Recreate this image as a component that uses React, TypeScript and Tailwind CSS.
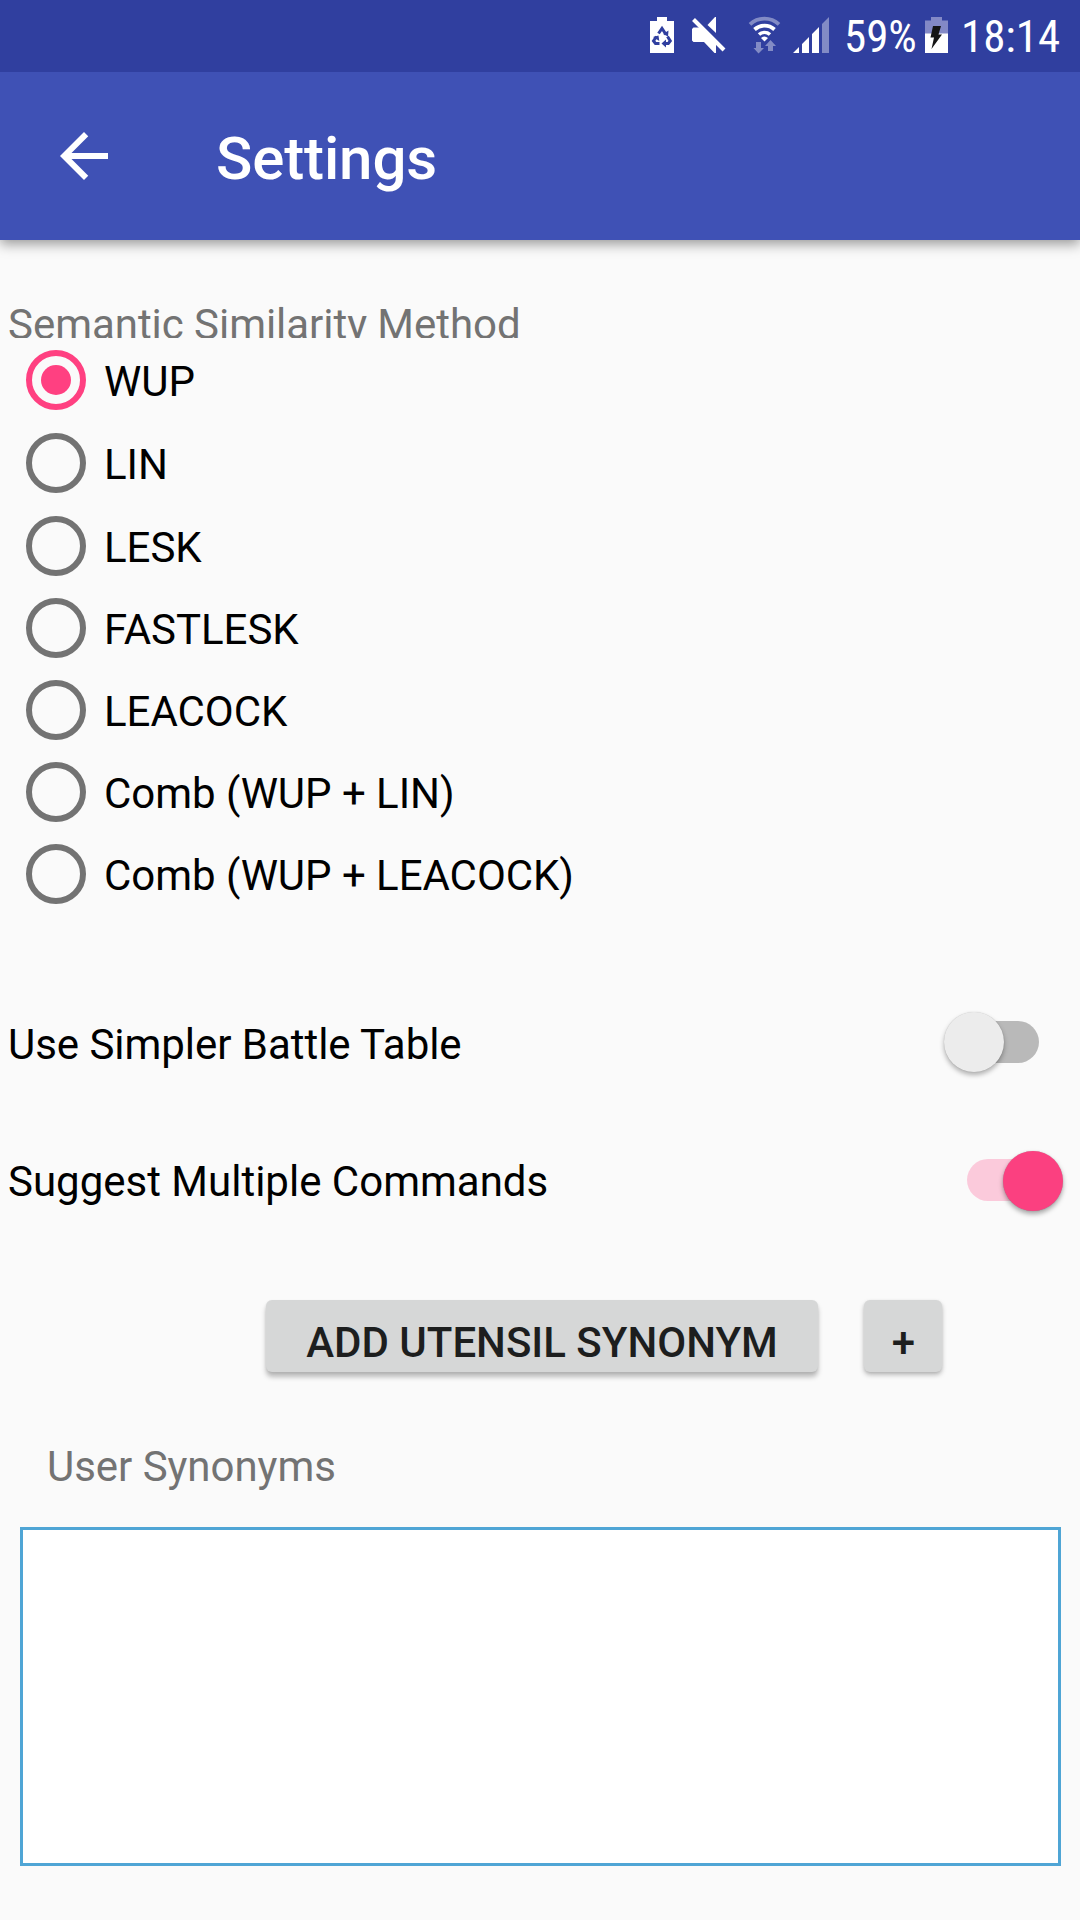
import React from "react";

const options = [
  { label: "WUP", row: "h-[83px]", on: true },
  { label: "LIN", row: "h-[83px]", on: false },
  { label: "LESK", row: "h-[82px]", on: false },
  { label: "FASTLESK", row: "h-[82px]", on: false },
  { label: "LEACOCK", row: "h-[82px]", on: false },
  { label: "Comb (WUP + LIN)", row: "h-[82px]", on: false },
  { label: "Comb (WUP + LEACOCK)", row: "h-[82px]", on: false },
];

function StatusIcons() {
  return (
    <svg width="200" height="72" viewBox="640 0 200 72" className="block h-[72px] w-[200px]">
      <path d="M657 17h10v4h7v32h-24V21h7z" fill="#fff" />
      <g fill="none" stroke="#303f9f" strokeWidth="3">
        <path d="M658.500 33.500l3.500-5 4 6" />
        <path d="M667.500 36.500l2.800 4.500-2 2.500h-4" />
        <path d="M659.500 43.500h-4l-2-2.500 3-4.500" />
      </g>
      <g fill="#303f9f">
        <path d="M668.500 30.500l-.5 6-5-2.500z" />
        <path d="M666 39.500v8l-4.500-4z" />
        <path d="M653 37l5.500-1.500.8 5.500z" />
      </g>
      <path d="M692 29l1.500-1.500h8.500L716 42v11h-1.500L704 42h-10.500L692 40.500z" fill="#fff" />
      <path d="M707.500 25l7.500-8h1v16z" fill="#fff" />
      <path d="M693.500 19.500L724 50" stroke="#fff" strokeWidth="4" />
      <g fill="none" stroke="#fff">
        <path d="M750 24.300a21.500 21.500 0 0 1 29 0" strokeWidth="3.800" opacity=".4" />
        <path d="M754.500 29.500a15 15 0 0 1 20 0" strokeWidth="3.800" />
        <path d="M759 34.500a8.500 8.500 0 0 1 11 0" strokeWidth="3.600" />
      </g>
      <path d="M761 38q3.500-3 7 0l-3.500 3.500z" fill="#fff" />
      <path d="M756 42h5v6h3l-5.500 5.500L753.500 48h2.500zM768 51v-5h-3l5.500-6 5.500 6h-3v5z" fill="#fff" opacity=".4" />
      <path d="M793 53l6-6v6zM802 53v-9l7-7v16zM812 53V34l7-7v26z" fill="#fff" />
      <path d="M822 53V24l7-7v36z" fill="#fff" opacity=".4" />
    </svg>
  );
}

function Battery() {
  return (
    <svg width="24" height="72" viewBox="925 0 24 72" className="block h-[72px] w-[24px]">
      <path d="M931 17h11v3.500h6V34h-23V20.500h6z" fill="#8389c6" />
      <path d="M925 33.500h23V53h-23z" fill="#fff" />
      <path d="M933 26h8l-2.500 8.500h3.500L931.500 49l2.500-11.500h-3.500z" fill="#151515" />
    </svg>
  );
}

function Switch({ on }: { on: boolean }) {
  return (
    <div className="relative mr-[17px] flex h-[60px] w-[120px] items-center justify-center">
      <div className={on ? "h-[42px] w-[72px] rounded-full bg-[#fbcadb]" : "h-[42px] w-[72px] rounded-full bg-[#b9b9b9]"} />
      <div
        className={
          on
            ? "absolute top-px right-[0.5px] size-[60px] rounded-full bg-[#fb4080] shadow-[0_3px_5px_rgba(0,0,0,0.35),0_0_1px_rgba(0,0,0,0.25)]"
            : "absolute top-0 left-[0.5px] size-[60px] rounded-full bg-[#ececec] shadow-[0_3px_5px_rgba(0,0,0,0.3),0_0_1px_rgba(0,0,0,0.2)]"
        }
      />
    </div>
  );
}

export default function App() {
  return (
    <div className="flex h-[1920px] w-[1080px] flex-col overflow-hidden bg-[#fafafa] font-['Roboto',sans-serif] text-[42px] leading-[50px] tracking-[-0.04px] text-black">
      <div className="relative z-10 flex h-[72px] shrink-0 bg-[#303f9f] text-white">
        <div className="ml-[640px] w-[200px]">
          <StatusIcons />
        </div>
        <div className="w-[85px] pt-[10px] pl-[4px]">
          <span className="block whitespace-nowrap text-[45px] leading-[54px] [font-stretch:75%]">59%</span>
        </div>
        <Battery />
        <div className="pt-[10px] pl-[12px]">
          <span className="block whitespace-nowrap text-[45px] leading-[54px] [font-stretch:75%]">18:14</span>
        </div>
      </div>
      <header className="flex h-[168px] shrink-0 items-center bg-[#3f51b5] text-white shadow-[0_4px_12px_rgba(0,0,0,0.4)]">
        <svg width="72" height="72" viewBox="0 0 24 24" className="ml-[48px]" fill="currentColor">
          <path d="M20 11H7.830l5.590-5.590L12 4l-8 8 8 8 1.410-1.410L7.830 13H20v-2z" />
        </svg>
        <h1 className="ml-[96px] pt-[6px] text-[60px] leading-[70px] font-medium tracking-[-0.12px]">Settings</h1>
      </header>
      <div className="mt-[60px] ml-[8px] h-[38px] shrink-0 overflow-hidden text-[#737373]">Semantic Similarity Method</div>
      <div className="mt-[12px] flex shrink-0 flex-col">
        {options.map((o) => (
          <label key={o.label} className={`flex items-start pl-[26px] ${o.row}`}>
            <span className={o.on ? "flex size-[60px] items-center justify-center rounded-full border-[6px] border-[#ff4081]" : "size-[60px] rounded-full border-[6px] border-[#737373]"}>
              {o.on && <span className="size-[30px] rounded-full bg-[#ff4081]" />}
            </span>
            <span className="ml-[18px] pt-[7px]">{o.label}</span>
          </label>
        ))}
      </div>
      <div className="mt-[86px] flex h-[60px] shrink-0 items-center justify-between pl-[8px]">
        <span className="pt-[6px]">Use Simpler Battle Table</span>
        <Switch on={false} />
      </div>
      <div className="mt-[78px] flex h-[60px] shrink-0 items-center justify-between pl-[8px]">
        <span className="pt-[4px] tracking-normal">Suggest Multiple Commands</span>
        <Switch on={true} />
      </div>
      <div className="mt-[90px] flex shrink-0 gap-[46px] pl-[266px] font-medium tracking-normal text-[#1d1e1e]">
        <button className="h-[72px] w-[552px] rounded-[6px] bg-[#d6d7d7] pt-[14px] leading-[50px] shadow-[0_5px_5px_rgba(0,0,0,0.25),0_1px_3px_rgba(0,0,0,0.08)]">ADD UTENSIL SYNONYM</button>
        <button className="h-[72px] w-[78px] rounded-[6px] bg-[#d6d7d7] pt-[14px] pl-px leading-[50px] shadow-[0_3px_5px_rgba(0,0,0,0.25),0_1px_3px_rgba(0,0,0,0.08)]">+</button>
      </div>
      <div className="mt-[70px] ml-[47px] h-[50px] shrink-0 text-[#737373]">User Synonyms</div>
      <div className="mt-[35px] ml-[20px] h-[339px] w-[1041px] shrink-0 border-[3px] border-[#4fa5d5] bg-white" />
    </div>
  );
}
